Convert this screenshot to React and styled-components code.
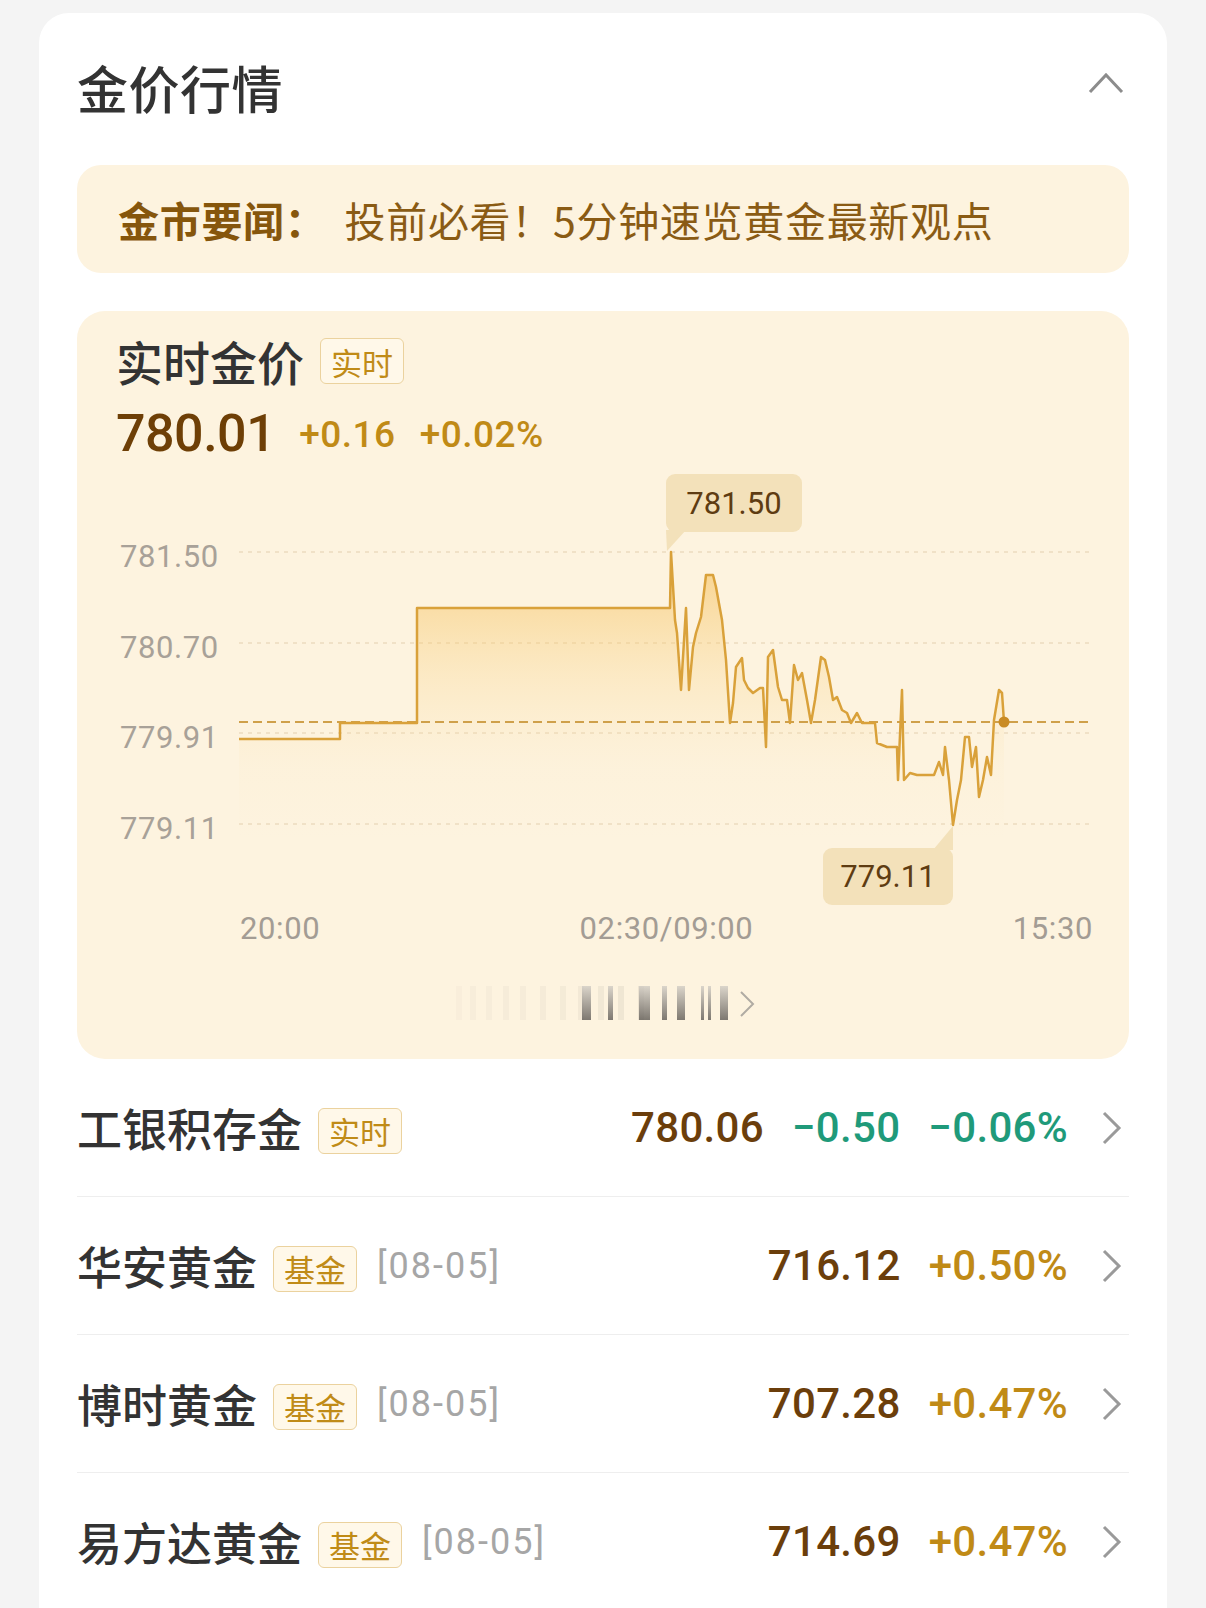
import React from 'react';
import styled, { createGlobalStyle } from 'styled-components';

const GlobalStyle = createGlobalStyle`
  body {
    margin: 0;
    background: #f4f4f4;
    font-family: Roboto, "Noto Sans CJK SC", sans-serif;
  }
`;

const Page = styled.div`
  padding: 13px 39px 0;
`;

const Card = styled.div`
  background: #fff;
  border-radius: 30px 30px 0 0;
  padding: 49px 38px 0;
  min-height: 1595px;
  box-sizing: border-box;
`;

const Header = styled.div`
  display: flex;
  align-items: center;
  justify-content: space-between;
  height: 50px;
`;

const Title = styled.h2`
  margin: 0;
  font-family: "Noto Sans CJK SC", sans-serif;
  font-size: 51px;
  line-height: 50px;
  font-weight: 500;
  letter-spacing: 0.5px;
  color: #333;
`;

const Collapse = styled.svg`
  margin: 0 5px 9px 0;
`;

const News = styled.div`
  margin-top: 53px;
  height: 108px;
  border-radius: 24px;
  background: #fdf3df;
  display: flex;
  align-items: center;
  padding-left: 41px;
  font-family: "Noto Sans CJK SC", sans-serif;
  font-size: 41px;
  letter-spacing: 0.7px;
  color: #8a5b14;
`;

const NewsLabel = styled.span`
  font-weight: 700;
  color: #86560c;
  margin-right: 18px;
`;

const ChartCard = styled.div`
  margin-top: 38px;
  border-radius: 28px;
  background: #fdf3df;
  padding: 27px 0 36px;
`;

const ChartHead = styled.div`
  display: flex;
  align-items: center;
  padding-left: 39px;
  height: 46px;
`;

const ChartTitle = styled.span`
  font-family: "Noto Sans CJK SC", sans-serif;
  font-size: 47px;
  line-height: 46px;
  font-weight: 500;
  color: #333;
`;

const Tag = styled.span`
  display: inline-flex;
  align-items: center;
  box-sizing: border-box;
  height: 46px;
  padding: 0 10px;
  margin-left: ${p => p.gap || 16}px;
  margin-top: ${p => p.drop || 0}px;
  border: 1px solid #ebd29e;
  border-radius: 6px;
  background: #fff8e9;
  color: #c08b17;
  font-family: "Noto Sans CJK SC", sans-serif;
  font-size: 31px;
  line-height: 1;
`;

const PriceRow = styled.div`
  display: flex;
  align-items: center;
  gap: 24px;
  margin-top: 24px;
  padding-left: 39px;
  height: 52px;
`;

const Price = styled.span`
  font-size: ${p => p.size}px;
  font-weight: 500;
  line-height: 1;
  color: ${p => p.color};
  letter-spacing: ${p => p.spacing || 0}px;
`;

const Plot = styled.svg`
  display: block;
  width: 1052px;
  height: 450px;
  font-family: Roboto, sans-serif;
`;

const XAxis = styled.div`
  display: flex;
  justify-content: space-between;
  margin-top: 3px;
  padding: 0 36px 0 163px;
  font-size: 31px;
  line-height: 31px;
  letter-spacing: 0.6px;
  color: #a39c94;
`;

const Slider = styled.svg`
  display: block;
  margin: 39px auto 0;
`;

const Row = styled.div`
  display: flex;
  align-items: center;
  height: 137px;
  border-bottom: 1px solid #eeeeee;
`;

const Name = styled.span`
  font-family: "Noto Sans CJK SC", sans-serif;
  font-size: 45px;
  line-height: 1;
  font-weight: 500;
  color: #333;
`;

const DateTag = styled.span`
  margin-left: 20px;
  font-size: 36px;
  letter-spacing: 2px;
  color: #a6a6a6;
`;

const Quote = styled.div`
  display: flex;
  align-items: center;
  gap: 28px;
  margin-left: auto;
`;

const Arrow = styled.svg`
  margin: 0 7px 0 34px;
`;

const BROWN = '#6b3e0b';
const GOLD = '#c08a16';
const GREEN = '#1f9a7a';

const pts = [
  [239, 739], [340, 739], [340, 723], [417, 723], [417, 608], [670, 608],
  [671, 552], [675, 620], [677, 633], [681, 690], [686, 608], [689, 690],
  [693, 647], [696, 633], [701, 617], [706, 575], [713, 575], [716, 587],
  [722, 620], [726, 660], [730, 723], [733, 703], [736, 667], [742, 658],
  [744, 680], [748, 688], [753, 693], [760, 688], [763, 688], [766, 747],
  [768, 657], [773, 650], [778, 687], [782, 700], [787, 700], [790, 723],
  [794, 665], [798, 680], [802, 673], [807, 700], [811, 723], [815, 700],
  [821, 657], [825, 660], [829, 677], [833, 700], [837, 697], [842, 710],
  [847, 713], [851, 723], [857, 713], [862, 723], [875, 723], [877, 743],
  [887, 747], [897, 747], [898, 780], [902, 690], [904, 780], [910, 773],
  [917, 775], [934, 775], [939, 762], [943, 775], [945, 747], [949, 780],
  [953, 825], [957, 800], [961, 780], [965, 737], [969, 737], [972, 767],
  [976, 747], [979, 797], [983, 780], [987, 757], [991, 775], [994, 720],
  [999, 690], [1002, 693], [1004, 722],
];

const linePath = pts.map((p, i) => `${i ? 'L' : 'M'}${p[0]} ${p[1]}`).join(' ');
const areaPath = `${linePath} L1004 840 L239 840 Z`;

const yTicks = [
  { v: '781.50', y: 552 },
  { v: '780.70', y: 643 },
  { v: '779.91', y: 733 },
  { v: '779.11', y: 824 },
];

const sliderBars = [
  [8, 0.04], [22, 0.05], [38, 0.05], [55, 0.06], [72, 0.06], [92, 0.07],
  [112, 0.08], [130, 0.09], [150, 0.1], [170, 0.12], [190, 0.14],
];
const sliderDark = [
  [134, 9], [160, 5], [191, 11], [214, 5], [229, 8], [253, 3], [260, 3], [272, 8],
];

const rows = [
  { name: '工银积存金', tag: '实时', price: '780.06', change: '−0.50', pct: '−0.06%', color: GREEN },
  { name: '华安黄金', tag: '基金', date: '[08-05]', price: '716.12', pct: '+0.50%', color: GOLD },
  { name: '博时黄金', tag: '基金', date: '[08-05]', price: '707.28', pct: '+0.47%', color: GOLD },
  { name: '易方达黄金', tag: '基金', date: '[08-05]', price: '714.69', pct: '+0.47%', color: GOLD },
];

const Chart = () => (
  <Plot viewBox="77 460 1052 450">
    <defs>
      <linearGradient id="fill" x1="0" y1="560" x2="0" y2="840" gradientUnits="userSpaceOnUse">
        <stop offset="0" stopColor="#f5bd55" stopOpacity="0.6" />
        <stop offset="0.4" stopColor="#f8cf7c" stopOpacity="0.28" />
        <stop offset="0.75" stopColor="#fbe3b0" stopOpacity="0.08" />
        <stop offset="1" stopColor="#fbe3b0" stopOpacity="0" />
      </linearGradient>
    </defs>
    {yTicks.map(t => (
      <g key={t.v}>
        <line x1="239" x2="1091" y1={t.y} y2={t.y} stroke="#ecdcc0" strokeWidth="1.5" strokeDasharray="4 5" />
        <text x="120" y={t.y + 15} fontSize="31" fill="#a8a198" letterSpacing="0.6">{t.v}</text>
      </g>
    ))}
    <path d={areaPath} fill="url(#fill)" />
    <line x1="239" x2="1091" y1="722" y2="722" stroke="#cfa04a" strokeWidth="2" strokeDasharray="9 5" />
    <path d={linePath} fill="none" stroke="#d9a13a" strokeWidth="2.5" strokeLinejoin="round" />
    <circle cx="1004" cy="722" r="5.5" fill="#c98b25" />

    <path d="M666 530 L686 530 L667 551 Z" fill="#f3e1ba" />
    <rect x="666" y="474" width="136" height="58" rx="9" fill="#f3e1ba" />
    <text x="734" y="514" fontSize="31" textAnchor="middle" fill="#5e3c12">781.50</text>

    <path d="M953 826 L953 850 L933 850 Z" fill="#f3e1ba" />
    <rect x="823" y="848" width="130" height="57" rx="9" fill="#f3e1ba" />
    <text x="888" y="887" fontSize="31" textAnchor="middle" fill="#5e3c12">779.11</text>
  </Plot>
);

const SliderHint = () => (
  <Slider width="310" height="40" viewBox="0 0 310 40">
    <defs>
      <linearGradient id="bar" x1="0" y1="0" x2="0" y2="1">
        <stop offset="0" stopColor="#d2cdc5" />
        <stop offset="1" stopColor="#5e5a55" />
      </linearGradient>
    </defs>
    {sliderBars.map(([x, o]) => (
      <rect key={x} x={x} y="3" width="6" height="34" fill="#8d8880" opacity={o} />
    ))}
    {sliderDark.map(([x, w]) => (
      <rect key={x} x={x} y="3" width={w} height="34" fill="url(#bar)" opacity="0.8" />
    ))}
    <polyline points="293,9 305,21 293,33" fill="none" stroke="#b0aba3" strokeWidth="2" />
  </Slider>
);

const App = () => (
  <Page>
    <GlobalStyle />
    <Card>
      <Header>
        <Title>金价行情</Title>
        <Collapse width="36" height="22" viewBox="0 0 36 22">
          <polyline points="2,20 18,3 34,20" fill="none" stroke="#8c8c8c" strokeWidth="3" />
        </Collapse>
      </Header>

      <News>
        <NewsLabel>金市要闻：</NewsLabel>
        投前必看！5分钟速览黄金最新观点
      </News>

      <ChartCard>
        <ChartHead>
          <ChartTitle>实时金价</ChartTitle>
          <Tag>实时</Tag>
        </ChartHead>
        <PriceRow>
          <Price size={52} color="#6e3f06" spacing={-0.5}>780.01</Price>
          <Price size={37} color={GOLD} spacing={0.5}>+0.16</Price>
          <Price size={37} color={GOLD} spacing={0.5}>+0.02%</Price>
        </PriceRow>
        <Chart />
        <XAxis>
          <span>20:00</span>
          <span>02:30/09:00</span>
          <span>15:30</span>
        </XAxis>
        <SliderHint />
      </ChartCard>

      {rows.map(r => (
        <Row key={r.name}>
          <Name>{r.name}</Name>
          <Tag gap={16} drop={6}>{r.tag}</Tag>
          {r.date && <DateTag>{r.date}</DateTag>}
          <Quote>
            <Price size={42} color={BROWN} spacing={0.3}>{r.price}</Price>
            {r.change && <Price size={42} color={r.color} spacing={0.3}>{r.change}</Price>}
            <Price size={42} color={r.color} spacing={0.3}>{r.pct}</Price>
          </Quote>
          <Arrow width="20" height="34" viewBox="0 0 20 34">
            <polyline points="2,2 17,17 2,32" fill="none" stroke="#9a9a9a" strokeWidth="3" />
          </Arrow>
        </Row>
      ))}
    </Card>
  </Page>
);

export default App;
